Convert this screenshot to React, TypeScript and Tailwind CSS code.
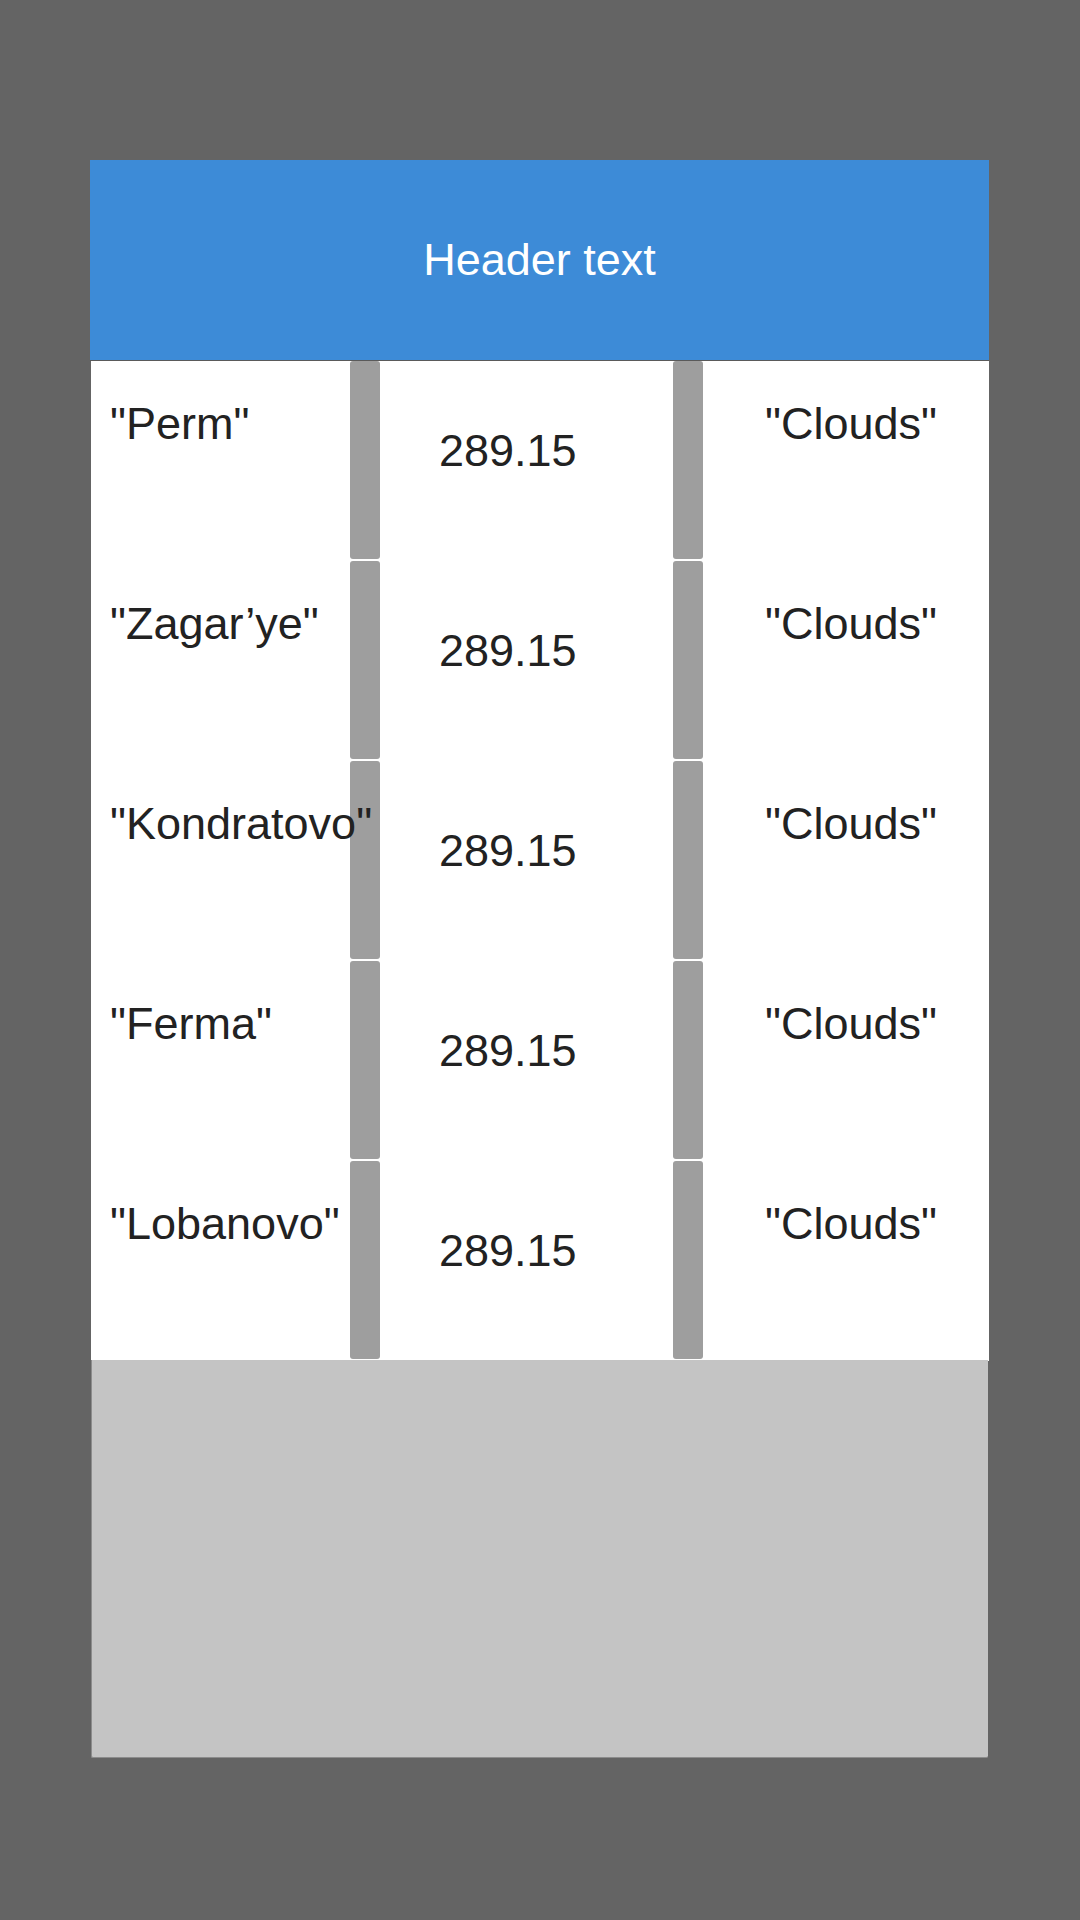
const rows = [
  { city: '"Perm"', temp: '289.15', weather: '"Clouds"' },
  { city: '"Zagar’ye"', temp: '289.15', weather: '"Clouds"' },
  { city: '"Kondratovo"', temp: '289.15', weather: '"Clouds"' },
  { city: '"Ferma"', temp: '289.15', weather: '"Clouds"' },
  { city: '"Lobanovo"', temp: '289.15', weather: '"Clouds"' },
]

function Divider() {
  return <div className="w-[30px] h-[198px] shrink-0 rounded-[3px] bg-[#9e9e9e]" />
}

export default function App() {
  return (
    <div
      className="w-[1080px] h-[1920px] bg-[#646464] pt-[160px] pl-[90px]"
      style={{ fontFamily: '"Liberation Sans", Arial, sans-serif' }}
    >
      <div className="w-[899px]">
        <header className="h-[201px] bg-[#3d8bd7] border-b border-[#5a5a5a] flex items-center justify-center">
          <span className="text-[45px] leading-[52px] text-white">Header text</span>
        </header>

        <div className="ml-[1px] mr-[0.5px] bg-white text-[#222222] text-[45px] leading-[52px]">
          {rows.map((row, i) => (
            <div key={i} className="flex h-[200px]">
              <div className="w-[259px] shrink-0 pl-[19px] pt-[37px] whitespace-nowrap">
                <span className="relative z-10">{row.city}</span>
              </div>
              <Divider />
              <div className="w-[293px] shrink-0 pl-[59px] pt-[64px]">{row.temp}</div>
              <Divider />
              <div className="flex-1 pl-[62px] pt-[37px] whitespace-nowrap">{row.weather}</div>
            </div>
          ))}
        </div>

        {/* leeres Panel unter der Tabelle */}
        <div className="mx-[1px] -mt-[1px] h-[398px] bg-[#c4c4c4] border-l border-b border-[#8c8c8c] rounded-bl-[2px] rounded-br-[2px]" />
      </div>
    </div>
  )
}
